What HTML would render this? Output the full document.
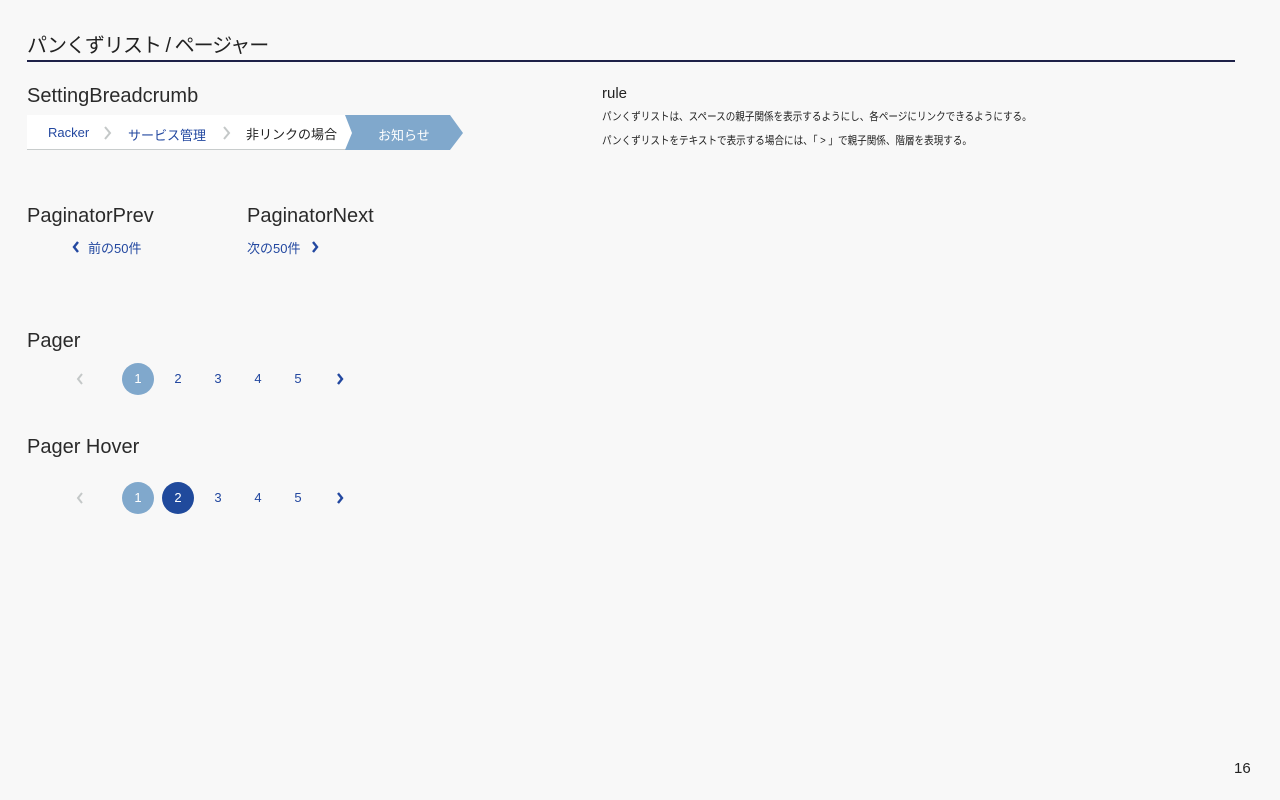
<!DOCTYPE html>
<html><head><meta charset="utf-8"><style>
body{margin:0;width:1280px;height:800px;background:#f8f8f8;font-family:"Liberation Sans","Noto Sans CJK JP",sans-serif;color:#222;position:relative;overflow:hidden}
.a{position:absolute;white-space:nowrap}
.h{font-size:20px;color:#2a2a2a}
.lnk{color:#2348a0;font-size:13px}
.pg{position:absolute;width:32px;height:32px;border-radius:50%;text-align:center;line-height:32px;font-size:13px;color:#2348a0}
.r{font-size:11px;color:#222;transform:scaleX(0.87);transform-origin:0 0}
</style></head><body>
<div class="a" style="left:27px;top:29px;font-size:20px;color:#222;letter-spacing:-1px">パンくずリスト / ページャー</div>
<div class="a" style="left:27px;top:60px;width:1208px;height:2px;background:#1e2148"></div>

<div class="a h" style="left:27px;top:85px">SettingBreadcrumb</div>
<div class="a" style="left:27px;top:115px;width:325px;height:35px;background:#fff;border-bottom:1px solid #c8cccc;box-sizing:border-box"></div>
<svg class="a" style="left:0;top:0" width="480" height="160">
<polygon points="345,115 450,115 463,133 450,150 345,150 352,133" fill="#80a8cc"/>
<polyline points="105,127 110,133 105,139" fill="none" stroke="#c4c8c8" stroke-width="2"/>
<polyline points="224,127 229,133 224,139" fill="none" stroke="#c4c8c8" stroke-width="2"/>
</svg>
<div class="a lnk" style="left:48px;top:125px">Racker</div>
<div class="a lnk" style="left:128px;top:125px">サービス管理</div>
<div class="a" style="left:246px;top:124px;font-size:13px;color:#222">非リンクの場合</div>
<div class="a" style="left:378px;top:125px;font-size:13px;color:#fff">お知らせ</div>

<div class="a" style="left:602px;top:85px;font-size:15px;color:#222">rule</div>
<div class="a r" style="left:602px;top:108px">パンくずリストは、スペースの親子関係を表示するようにし、各ページにリンクできるようにする。</div>
<div class="a r" style="left:602px;top:132px">パンくずリストをテキストで表示する場合には、「 &gt; 」で親子関係、階層を表現する。</div>

<div class="a h" style="left:27px;top:205px">PaginatorPrev</div>
<div class="a h" style="left:247px;top:205px">PaginatorNext</div>
<svg class="a" style="left:0;top:0" width="400" height="560">
<polyline points="78,242 74,247 78,252" fill="none" stroke="#2348a0" stroke-width="2.4"/>
<polyline points="313,242 317,247 313,252" fill="none" stroke="#2348a0" stroke-width="2.4"/>
<polyline points="82,374 78,379 82,384" fill="none" stroke="#c4c8c8" stroke-width="2"/>
<polyline points="338,374 342,379 338,384" fill="none" stroke="#2348a0" stroke-width="2.4"/>
<polyline points="82,493 78,498 82,503" fill="none" stroke="#c4c8c8" stroke-width="2"/>
<polyline points="338,493 342,498 338,503" fill="none" stroke="#2348a0" stroke-width="2.4"/>
</svg>
<div class="a lnk" style="left:88px;top:238px">前の50件</div>
<div class="a lnk" style="left:247px;top:238px">次の50件</div>

<div class="a h" style="left:27px;top:330px">Pager</div>
<div class="pg" style="left:122px;top:363px;background:#80a8cc;color:#fff">1</div>
<div class="pg" style="left:162px;top:363px">2</div>
<div class="pg" style="left:202px;top:363px">3</div>
<div class="pg" style="left:242px;top:363px">4</div>
<div class="pg" style="left:282px;top:363px">5</div>

<div class="a h" style="left:27px;top:436px">Pager Hover</div>
<div class="pg" style="left:122px;top:482px;background:#80a8cc;color:#fff">1</div>
<div class="pg" style="left:162px;top:482px;background:#204a9c;color:#fff">2</div>
<div class="pg" style="left:202px;top:482px">3</div>
<div class="pg" style="left:242px;top:482px">4</div>
<div class="pg" style="left:282px;top:482px">5</div>

<div class="a" style="left:1234px;top:760px;font-size:15px;color:#222">16</div>
</body></html>
